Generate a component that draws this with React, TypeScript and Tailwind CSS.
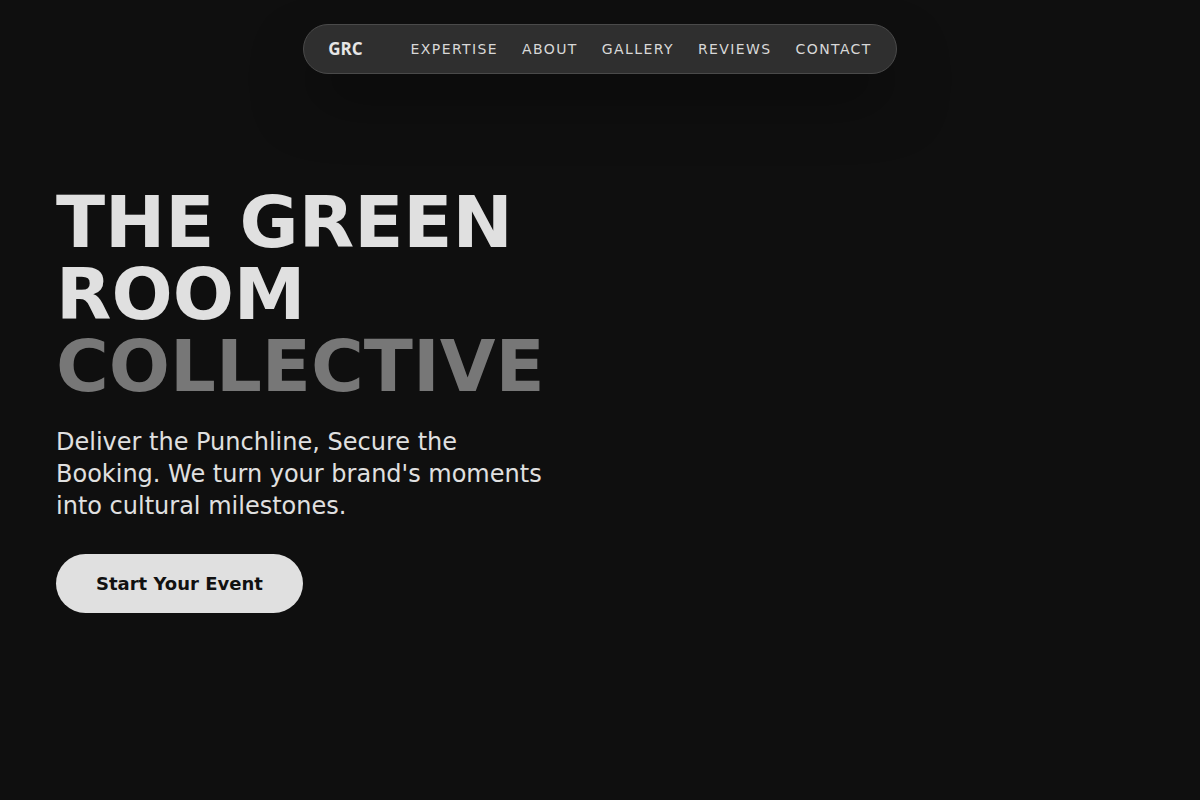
import React from "react";

export default function App() {
  const links = ["EXPERTISE", "ABOUT", "GALLERY", "REVIEWS", "CONTACT"];
  return (
    <div className="min-h-[800px] w-full bg-[#0f0f0f] text-[#e0e0e0] [font-family:'DejaVu_Sans',sans-serif]">
      <header className="flex justify-center pt-6">
        <nav className="flex h-[50px] items-center rounded-full border border-[#4a4a4a] bg-[#2f2f2f] px-6 shadow-[0_30px_60px_-10px_rgba(0,0,0,0.5)]">
          <span className="mr-12 text-[17px] font-bold text-[#e6e6e6] [font-family:'Open_Sans',sans-serif]">GRC</span>
          <ul className="flex items-center gap-6">
            {links.map((l) => (
              <li key={l} className="text-[14px] tracking-[0.1em] text-[#d8d8d8]">
                {l}
              </li>
            ))}
          </ul>
        </nav>
      </header>
      <main className="px-14 pt-[112px]">
        <h1 className="text-[72px] font-bold leading-[72px] text-[#e0e0e0]">
          THE GREEN
          <br />
          ROOM
          <br />
          <span className="text-[#777777]">COLLECTIVE</span>
        </h1>
        <p className="mt-6 max-w-[500px] text-[24px] leading-[32px] text-[#e0e0e0]">
          Deliver the Punchline, Secure the Booking. We turn your brand's moments into cultural milestones.
        </p>
        <button className="mt-8 h-[59px] rounded-full bg-[#e0e0e0] px-10 text-[18px] font-bold text-[#111111]">
          Start Your Event
        </button>
      </main>
    </div>
  );
}
